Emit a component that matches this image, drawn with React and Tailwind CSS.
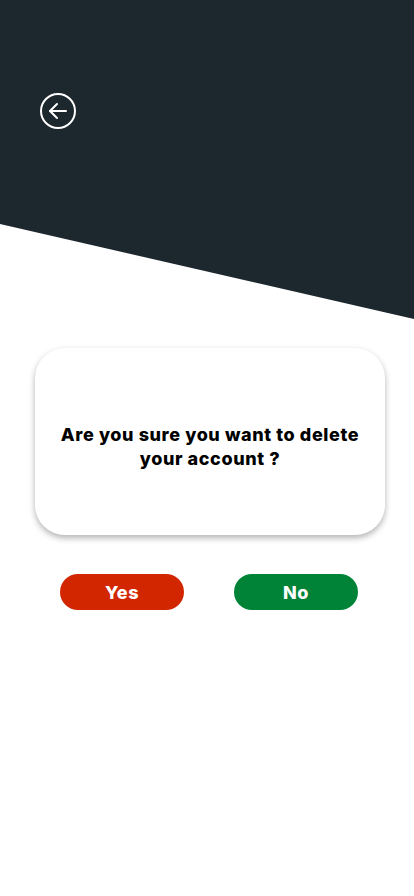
import React from "react";

const BackIcon = () => (
  <svg width="38" height="38" viewBox="0 0 38 38" fill="none" stroke="white" strokeWidth="2" strokeLinecap="round" strokeLinejoin="round">
    <circle cx="19" cy="19" r="17" />
    <path d="M27 19H11" />
    <path d="M18 12l-7 7 7 7" />
  </svg>
);

const DeleteAccount = () => {
  return (
    <div className="w-[414px] min-h-[896px] bg-white font-['Inter',sans-serif]">
      {/* slanted dark header */}
      <div className="h-[319px] bg-[#1d272e] [clip-path:polygon(0_0,100%_0,100%_100%,0_224px)] pt-[92px] pl-[39px]">
        <button className="block">
          <BackIcon />
        </button>
      </div>

      <div className="ml-[35px] w-[350px] mt-[29px] h-[187px] rounded-[30px] bg-white shadow-[0_3px_6px_rgba(0,0,0,0.3)] flex items-center justify-center px-2 pt-[10px]">
        <p className="text-center text-[18px] leading-[24px] font-extrabold text-black tracking-[0.6px]">
          Are you sure you want to delete
          <br />
          your account ?
        </p>
      </div>

      <div className="mt-[39px] flex gap-[50px] pl-[60px]">
        <button className="w-[124px] h-[36px] rounded-full bg-[#d22600] text-white text-[18px] font-extrabold tracking-[0.5px]">
          Yes
        </button>
        <button className="w-[124px] h-[36px] rounded-full bg-[#008337] text-white text-[18px] font-extrabold tracking-[0.5px]">
          No
        </button>
      </div>
    </div>
  );
};

export default function App() {
  return <DeleteAccount />;
}
